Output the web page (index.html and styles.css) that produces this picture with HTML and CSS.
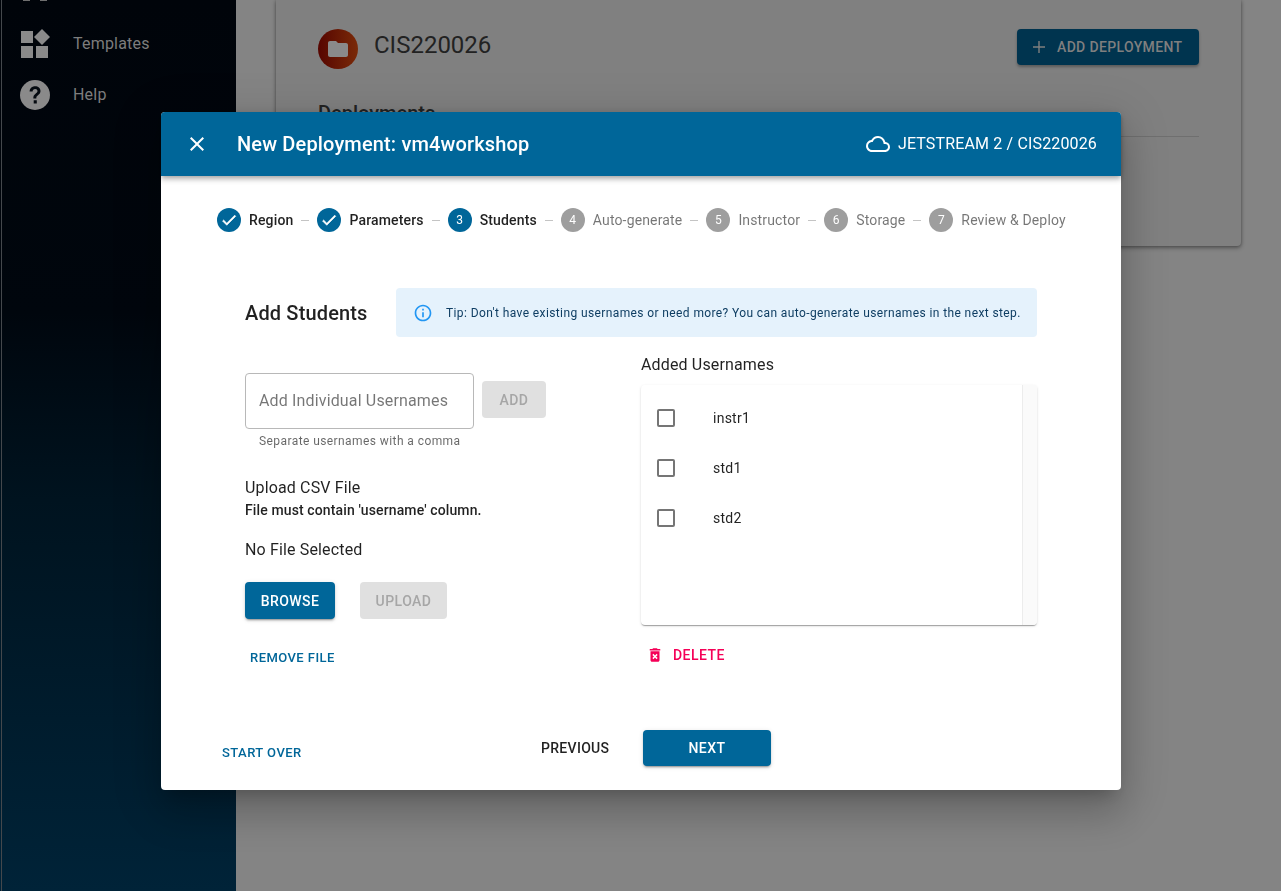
FILE: index.html
```html
<!DOCTYPE html>
<html lang="en">
<head>
    <meta charset="UTF-8">
    <meta name="viewport" content="width=device-width, initial-scale=1.0">
    <title>New Deployment</title>
    <link rel="stylesheet" href="styles.css">
</head>
<body>
    <div class="page">
        <nav class="sidebar">
            <div class="nav-stub"><span></span><span></span></div>
            <a class="nav-item">
                <svg class="nav-icon" viewBox="0 0 30 30"><path d="M1 2h12v12H1zM1 17h12v12H1zM16 17h12v12H16zM22 0l8 8-8 8-8-8z" fill="#8a8a8a"/></svg>
                <span>Templates</span>
            </a>
            <a class="nav-item">
                <svg class="nav-icon" viewBox="0 0 30 30"><circle cx="15" cy="15" r="15" fill="#8a8a8a"/><path d="M9.6 11.6c0-3.2 2.4-5.3 5.5-5.3s5.4 2 5.4 4.8c0 2-1 3.100-2.500 4.200-1.300 1-1.700 1.500-1.700 3.200h-3c0-2.500.7-3.500 2.200-4.700 1.200-.9 2-1.500 2-2.700 0-1.300-1-2.200-2.400-2.200-1.500 0-2.500 1-2.500 2.700zM13.700 20.300h3.100v3.100h-3.100z" fill="#050a10"/></svg>
                <span>Help</span>
            </a>
        </nav>
        <main class="content">
            <section class="card">
                <div class="card-head">
                    <div class="avatar">
                        <svg viewBox="0 0 24 24" width="24" height="24"><path d="M10 4H4c-1.100 0-2 .9-2 2v12c0 1.100.9 2 2 2h16c1.100 0 2-.9 2-2V8c0-1.100-.9-2-2-2h-8z" fill="#8a8a8a"/></svg>
                    </div>
                    <h1 class="card-title">CIS220026</h1>
                    <div class="add-deployment">
                        <svg class="plus" viewBox="0 0 14 14" width="14" height="14"><path d="M7 1v12M1 7h12" stroke="#7f7f7f" stroke-width="1.400" fill="none"/></svg>
                        ADD DEPLOYMENT
                    </div>
                </div>
                <h2 class="card-sub">Deployments</h2>
                <div class="card-rule"></div>
            </section>
        </main>
    </div>

    <div class="overlay">
        <div class="dialog">
            <header class="dialog-bar">
                <svg class="close-icon" viewBox="0 0 24 24" width="24" height="24"><path d="M19 6.410 17.590 5 12 10.590 6.410 5 5 6.410 10.590 12 5 17.590 6.410 19 12 13.410 17.590 19 19 17.590 13.410 12z" fill="#fff"/></svg>
                <div class="dialog-title">New Deployment: vm4workshop</div>
                <svg class="cloud-icon" viewBox="0 0 24 24" width="24" height="24"><path d="M19.350 10.040A7.490 7.490 0 0 0 12 4C9.110 4 6.600 5.640 5.350 8.040A5.994 5.994 0 0 0 0 14c0 3.310 2.690 6 6 6h13c2.760 0 5-2.240 5-5 0-2.640-2.050-4.780-4.650-4.960zM19 18H6c-2.210 0-4-1.790-4-4 0-2.050 1.530-3.760 3.560-3.970l1.070-.11.500-.95A5.469 5.469 0 0 1 12 6c2.620 0 4.880 1.860 5.390 4.430l.300 1.500 1.530.11A2.980 2.980 0 0 1 22 15c0 1.650-1.350 3-3 3z" fill="#fff"/></svg>
                <div class="dialog-cloud">JETSTREAM 2 / CIS220026</div>
            </header>

            <div class="stepper">
                <div class="step done"><span class="step-dot"><svg viewBox="0 0 24 24" width="18" height="18"><path d="M9 16.170 4.830 12l-1.420 1.410L9 19 21 7l-1.410-1.410z" fill="#fff" stroke="#fff" stroke-width="0.800"/></svg></span>Region</div>
                <span class="step-line"></span>
                <div class="step done"><span class="step-dot"><svg viewBox="0 0 24 24" width="18" height="18"><path d="M9 16.170 4.830 12l-1.420 1.410L9 19 21 7l-1.410-1.410z" fill="#fff" stroke="#fff" stroke-width="0.800"/></svg></span>Parameters</div>
                <span class="step-line"></span>
                <div class="step done"><span class="step-dot">3</span>Students</div>
                <span class="step-line"></span>
                <div class="step"><span class="step-dot">4</span>Auto-generate</div>
                <span class="step-line"></span>
                <div class="step"><span class="step-dot">5</span>Instructor</div>
                <span class="step-line"></span>
                <div class="step"><span class="step-dot">6</span>Storage</div>
                <span class="step-line"></span>
                <div class="step"><span class="step-dot">7</span>Review &amp; Deploy</div>
            </div>

            <div class="students">
                <div class="students-head">
                    <h2 class="students-title">Add Students</h2>
                    <div class="tip">
                        <svg viewBox="0 0 24 24" width="20" height="20"><path d="M11 7h2v2h-2zm0 4h2v6h-2zm1-9C6.480 2 2 6.480 2 12s4.480 10 10 10 10-4.480 10-10S17.520 2 12 2zm0 18c-4.410 0-8-3.590-8-8s3.590-8 8-8 8 3.590 8 8-3.590 8-8 8z" fill="#2196f3"/></svg>
                        <span>Tip: Don't have existing usernames or need more? You can auto-generate usernames in the next step.</span>
                    </div>
                </div>

                <div class="students-body">
                    <div class="col-left">
                        <div class="add-row">
                            <div class="text-field">Add Individual Usernames</div>
                            <div class="btn btn-disabled btn-add">ADD</div>
                        </div>
                        <div class="hint">Separate usernames with a comma</div>

                        <div class="upload-title">Upload CSV File</div>
                        <div class="upload-note">File must contain 'username' column.</div>
                        <div class="upload-file">No File Selected</div>
                        <div class="upload-row">
                            <div class="btn btn-primary btn-browse">BROWSE</div>
                            <div class="btn btn-disabled btn-upload">UPLOAD</div>
                        </div>
                        <div class="remove-file">REMOVE FILE</div>
                    </div>

                    <div class="col-right">
                        <div class="added-title">Added Usernames</div>
                        <div class="table">
                            <div class="table-rows">
                                <div class="table-row"><span class="checkbox"></span>instr1</div>
                                <div class="table-row"><span class="checkbox"></span>std1</div>
                                <div class="table-row"><span class="checkbox"></span>std2</div>
                            </div>
                            <div class="table-scroll"></div>
                        </div>
                        <div class="delete">
                            <svg viewBox="0 0 24 24" width="18" height="18"><path d="M6 19c0 1.100.9 2 2 2h8c1.100 0 2-.9 2-2V7H6zm2.460-7.120 1.410-1.410L12 12.590l2.120-2.120 1.410 1.410L13.410 14l2.120 2.120-1.410 1.410L12 15.410l-2.120 2.120-1.410-1.410L10.590 14zM15.500 4l-1-1h-5l-1 1H5v2h14V4z" fill="#f50057"/></svg>
                            <span>DELETE</span>
                        </div>
                    </div>
                </div>
            </div>

            <footer class="dialog-foot">
                <div class="start-over">START OVER</div>
                <div class="previous">PREVIOUS</div>
                <div class="btn btn-primary btn-next">NEXT</div>
            </footer>
        </div>
    </div>
</body>
</html>
```

FILE: styles.css
```css
* {
    box-sizing: border-box;
}
html, body {
    margin: 0;
    height: 100%;
    overflow: hidden;
}
body {
    font-family: Roboto, "Liberation Sans", sans-serif;
    background-color: #848484;
    color: rgba(0, 0, 0, 0.87);
}
.page {
    display: flex;
    height: 891px;
}
.sidebar {
    width: 236px;
    flex-shrink: 0;
    background: linear-gradient(180deg, #00040a 0%, #00060d 35%, #00131f 56%, #002338 100%);
    padding-left: 20px;
}
.sidebar::before {
    content: "";
    position: absolute;
    top: 0;
    left: 1px;
    bottom: 0;
    width: 1px;
    background-color: #44484c;
}
.nav-stub {
    display: flex;
    height: 2px;
    margin-bottom: 16px;
}
.nav-stub span {
    width: 7px;
    height: 1px;
    margin-left: 3px;
    margin-right: 7px;
    background-color: #6f6f6f;
}
.nav-item {
    display: flex;
    align-items: center;
    height: 51px;
    color: #7d7d7d;
    font-size: 16px;
    letter-spacing: 0.2px;
}
.nav-icon {
    width: 30px;
    height: 30px;
    margin-right: 23px;
}
.content {
    flex: 1;
    padding-left: 40px;
    padding-right: 40px;
}
.card {
    height: 246px;
    background-color: #808080;
    border-radius: 0 0 4px 4px;
    box-shadow: 0 2px 4px rgba(0, 0, 0, 0.35), 0 0 3px rgba(0, 0, 0, 0.25);
    padding: 29px 42px 0;
}
.card-head {
    display: flex;
    align-items: flex-start;
}
.avatar {
    width: 40px;
    height: 40px;
    border-radius: 50%;
    background: linear-gradient(90deg, #560500, #7a2a08);
    display: flex;
    align-items: center;
    justify-content: center;
}
.card-title {
    margin: 0 0 0 16px;
    font-size: 24px;
    font-weight: 400;
    line-height: 32px;
    color: #222;
    flex: 1;
}
.add-deployment {
    width: 182px;
    height: 36px;
    background-color: #00344f;
    border-radius: 4px;
    box-shadow: 0 2px 3px rgba(0, 0, 0, 0.3);
    color: #7f7f7f;
    font-size: 14px;
    font-weight: 500;
    letter-spacing: 0.35px;
    display: flex;
    align-items: center;
    padding-left: 15px;
}
.plus {
    margin-right: 11px;
}
.card-sub {
    margin: 30px 0 0;
    font-size: 20px;
    font-weight: 500;
    color: #222;
    line-height: 28px;
}
.card-rule {
    height: 1px;
    margin-top: 9px;
    background-color: #6f6f6f;
}
.overlay {
    position: fixed;
    top: 0;
    left: 0;
    right: 0;
    bottom: 0;
    padding: 112px 160px 0 161px;
}
.dialog {
    width: 960px;
    height: 678px;
    background-color: #fff;
    border-radius: 4px;
    box-shadow: 0 11px 15px -7px rgba(0, 0, 0, 0.2), 0 24px 38px 3px rgba(0, 0, 0, 0.14), 0 9px 46px 8px rgba(0, 0, 0, 0.12);
    display: flex;
    flex-direction: column;
}
.dialog-bar {
    height: 64px;
    background-color: #006699;
    border-radius: 4px 4px 0 0;
    box-shadow: 0 2px 4px -1px rgba(0, 0, 0, 0.2), 0 4px 5px 0 rgba(0, 0, 0, 0.14), 0 1px 10px 0 rgba(0, 0, 0, 0.12);
    color: #fff;
    display: flex;
    align-items: center;
    padding: 0 24px 0 24px;
    flex-shrink: 0;
}
.close-icon {
    margin-right: 28px;
}
.dialog-title {
    font-size: 20px;
    font-weight: 500;
    letter-spacing: 0.15px;
    flex: 1;
}
.cloud-icon {
    margin-right: 8px;
    width: 24px;
    height: 24px;
}
.dialog-cloud {
    font-size: 16px;
    letter-spacing: 0.15px;
    margin-bottom: 1px;
}
.stepper {
    display: flex;
    align-items: center;
    padding-left: 56px;
    height: 88px;
    flex-shrink: 0;
}
.step {
    display: flex;
    align-items: center;
    font-size: 14px;
    letter-spacing: 0.15px;
    color: rgba(0, 0, 0, 0.54);
}
.step.done {
    color: rgba(0, 0, 0, 0.87);
    font-weight: 500;
}
.step-dot {
    width: 24px;
    height: 24px;
    border-radius: 50%;
    background-color: #9e9e9e;
    color: #fff;
    font-size: 12px;
    font-weight: 400;
    margin-right: 8px;
    display: flex;
    align-items: center;
    justify-content: center;
}
.done .step-dot {
    background-color: #006699;
}
.step-line {
    width: 8px;
    height: 1px;
    background-color: #c4c4c4;
    margin: 0 8px;
}
.students {
    padding: 24px 84px 0;
    flex: 1;
}
.students-head {
    display: flex;
    align-items: center;
    height: 49px;
}
.students-title {
    margin: 0;
    width: 151px;
    font-size: 20px;
    font-weight: 500;
    letter-spacing: 0.15px;
}
.tip {
    flex: 1;
    height: 49px;
    background-color: #e5f2fc;
    border-radius: 4px;
    color: #0f3e63;
    font-size: 12px;
    letter-spacing: 0.39px;
    display: flex;
    align-items: center;
    padding-left: 17px;
}
.tip svg {
    margin-right: 13px;
}
.students-body {
    display: flex;
    justify-content: space-between;
    padding-top: 16px;
}
.col-left {
    width: 396px;
    padding-top: 20px;
}
.add-row {
    display: flex;
    align-items: flex-start;
}
.text-field {
    width: 229px;
    height: 56px;
    border: 1px solid #b8b8b8;
    border-radius: 4px;
    color: rgba(0, 0, 0, 0.54);
    font-size: 16px;
    letter-spacing: 0.15px;
    line-height: 54px;
    padding-left: 13px;
    white-space: nowrap;
}
.btn {
    display: flex;
    align-items: center;
    justify-content: center;
    border-radius: 4px;
    font-size: 14px;
    font-weight: 500;
    letter-spacing: 0.45px;
}
.btn-disabled {
    background-color: #e0e0e0;
    color: #a6a6a6;
}
.btn-primary {
    background-color: #006699;
    color: #fff;
    box-shadow: 0 3px 1px -2px rgba(0, 0, 0, 0.2), 0 2px 2px 0 rgba(0, 0, 0, 0.14), 0 1px 5px 0 rgba(0, 0, 0, 0.12);
}
.btn-add {
    width: 64px;
    height: 37px;
    margin: 8px 0 0 8px;
}
.hint {
    margin: 4px 0 0 14px;
    font-size: 12px;
    line-height: 16px;
    letter-spacing: 0.42px;
    color: rgba(0, 0, 0, 0.6);
}
.upload-title {
    margin-top: 27px;
    font-size: 16px;
    line-height: 24px;
    letter-spacing: 0.15px;
}
.upload-note {
    font-size: 14px;
    font-weight: 500;
    line-height: 21px;
    letter-spacing: 0.12px;
}
.upload-file {
    margin-top: 17px;
    font-size: 16px;
    line-height: 24px;
    letter-spacing: 0.15px;
}
.upload-row {
    display: flex;
    margin-top: 20px;
}
.btn-browse {
    width: 90px;
    height: 37px;
}
.btn-upload {
    width: 87px;
    height: 37px;
    margin-left: 25px;
}
.remove-file {
    margin: 31px 0 0 5px;
    font-size: 13px;
    font-weight: 500;
    line-height: 16px;
    letter-spacing: 0.45px;
    color: #006699;
}
.col-right {
    width: 396px;
}
.added-title {
    font-size: 16px;
    line-height: 24px;
    letter-spacing: 0.15px;
}
.table {
    margin-top: 8px;
    height: 240px;
    display: flex;
    border-radius: 4px;
    box-shadow: 0 2px 1px -1px rgba(0, 0, 0, 0.2), 0 1px 1px 0 rgba(0, 0, 0, 0.14), 0 1px 3px 0 rgba(0, 0, 0, 0.12);
}
.table-rows {
    flex: 1;
    padding-top: 8px;
}
.table-row {
    height: 50px;
    display: flex;
    align-items: center;
    font-size: 14px;
    letter-spacing: 0.25px;
    padding-left: 16px;
}
.checkbox {
    width: 18px;
    height: 18px;
    border: 2px solid #757575;
    border-radius: 2px;
    margin-right: 38px;
}
.table-scroll {
    width: 15px;
    background-color: #fafafa;
    border-left: 1px solid #ececec;
    border-radius: 0 4px 4px 0;
}
.delete {
    display: flex;
    align-items: center;
    margin: 21px 0 0 5px;
    color: #f50057;
    font-size: 14px;
    font-weight: 500;
    letter-spacing: 0.45px;
}
.delete svg {
    margin-right: 9px;
}
.dialog-foot {
    display: flex;
    align-items: center;
    padding: 0 0 24px 61px;
    flex-shrink: 0;
}
.start-over {
    width: 319px;
    padding-top: 8px;
    font-size: 13px;
    font-weight: 500;
    letter-spacing: 0.45px;
    color: #006699;
}
.previous {
    width: 102px;
    font-size: 14px;
    font-weight: 500;
    letter-spacing: 0.3px;
}
.btn-next {
    width: 128px;
    height: 36px;
}
```
